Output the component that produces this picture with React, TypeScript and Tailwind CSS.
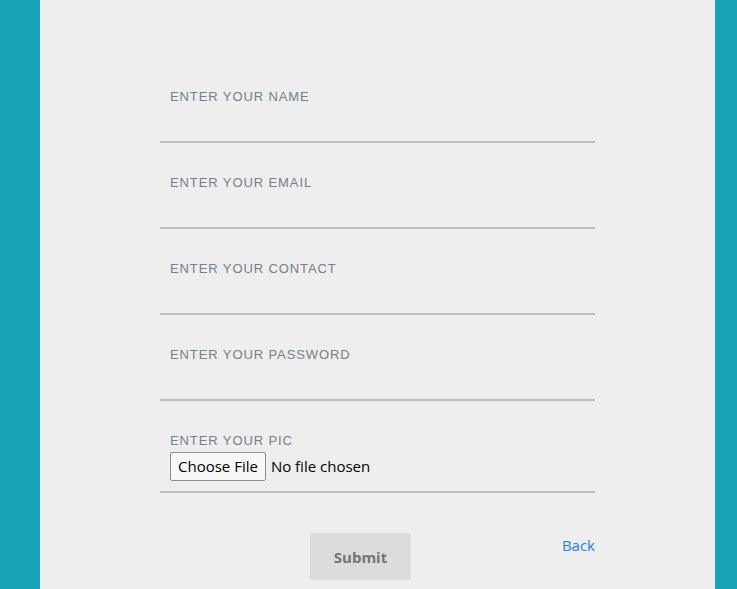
import React from "react";

const fields = ["Enter your name", "Enter your email", "Enter your contact", "Enter your password"];

export default function App() {
  return (
    <div className="flex h-[589px] w-full overflow-hidden bg-[#17a2b8]">
      <div className="ml-[40px] flex h-full w-[675px] flex-col items-center bg-[#eeeeee]">
        <div className="mt-[57px] flex w-[435px] flex-col">
          {fields.map((f) => (
            <div key={f} className="flex h-[86px] flex-col border-b-2 border-[#bdbdbd] pl-[10px] pt-[32px]">
              <label className="text-[13px] uppercase leading-[16px] tracking-[0.9px] text-[#74808b] [font-family:'Liberation_Sans',Arial,sans-serif]">
                {f}
              </label>
            </div>
          ))}
          <div className="flex h-[92px] flex-col border-b-2 border-[#bdbdbd] pl-[10px] pt-[32px]">
            <label className="text-[13px] uppercase leading-[16px] tracking-[0.9px] text-[#74808b] [font-family:'Liberation_Sans',Arial,sans-serif]">
              Enter your pic
            </label>
            <div className="mt-[3px] flex items-center gap-[5px] [font-family:'Open_Sans',sans-serif]">
              <button className="h-[29px] rounded-[2px] border border-[#8f8f8f] bg-[#f8f8f8] px-[7px] text-[15px] leading-none text-black">
                Choose File
              </button>
              <span className="text-[15px] text-black">No file chosen</span>
            </div>
          </div>
          <div className="mt-[40px] flex items-start">
            <button className="ml-[150px] h-[47px] w-[101px] rounded-[3px] bg-[#dcdcdc] pt-[2px] text-[15px] font-bold text-[#757575] [font-family:'Open_Sans',sans-serif]">
              Submit
            </button>
            <a href="#" className="ml-auto mt-[1px] text-[15px] text-[#1a7ff0] [font-family:'Open_Sans',sans-serif]">
              Back
            </a>
          </div>
        </div>
      </div>
    </div>
  );
}
